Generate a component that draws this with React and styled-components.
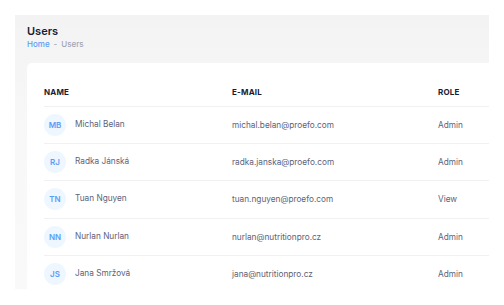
import React from 'react'
import styled, { createGlobalStyle } from 'styled-components'

const GlobalStyle = createGlobalStyle`
  body {
    margin: 0;
    background: #ffffff;
    font-family: Inter, "Noto Sans", "Liberation Sans", sans-serif;
  }
`

const Page = styled.div`
  padding: 15px;
`

const Panel = styled.section`
  width: 474px;
  height: 274px;
  overflow: hidden;
  box-sizing: border-box;
  padding: 9px 0 0 12px;
  background: linear-gradient(180deg, #f3f3f3 0%, #f8f8f8 45%, #f9f9f9 100%);
`

const Title = styled.h1`
  margin: 0 0 1px;
  font-size: 11px;
  line-height: 14px;
  font-weight: 600;
  color: #181c32;
`

const Crumbs = styled.div`
  display: flex;
  gap: 4px;
  font-size: 8px;
  line-height: 11px;
  font-weight: 500;
  color: #a1a5b7;

  & > .home {
    color: #5d9cf5;
  }
`

const Card = styled.div`
  margin-top: 13px;
  padding: 14px 0 0 17px;
  background: #ffffff;
  border-top-left-radius: 5px;
  min-height: 240px;
`

const Table = styled.table`
  width: 470px;
  border-collapse: collapse;
  table-layout: fixed;
`

const Th = styled.th`
  padding: 8.5px 0 8px;
  text-align: left;
  font-size: 8px;
  line-height: 12px;
  font-weight: 700;
  letter-spacing: 0.2px;
  text-transform: uppercase;
  color: #181c32;
  border-bottom: 1px solid #f1f1f4;
`

const Td = styled.td`
  padding: 7.2px 0;
  font-size: 8.25px;
  line-height: 12px;
  color: #5e6278;
  border-bottom: 1px solid #f1f1f4;
`

const User = styled.div`
  display: flex;
  align-items: center;
  gap: 9px;
`

const Avatar = styled.div`
  width: 22px;
  height: 22px;
  border-radius: 50%;
  background: #eef6ff;
  color: #5d9cf5;
  font-size: 8px;
  font-weight: 600;
  display: grid;
  place-items: center;
  flex: none;
`

const Name = styled.span`
  margin-bottom: 2px;
`

const users = [
  { initials: 'MB', name: 'Michal Belan', email: 'michal.belan@proefo.com', role: 'Admin' },
  { initials: 'RJ', name: 'Radka Jánská', email: 'radka.janska@proefo.com', role: 'Admin' },
  { initials: 'TN', name: 'Tuan Nguyen', email: 'tuan.nguyen@proefo.com', role: 'View' },
  { initials: 'NN', name: 'Nurlan Nurlan', email: 'nurlan@nutritionpro.cz', role: 'Admin' },
  { initials: 'JS', name: 'Jana Smržová', email: 'jana@nutritionpro.cz', role: 'Admin' },
]

const App = () => {
  return (
    <>
      <GlobalStyle />
      <Page>
        <Panel>
          <Title>Users</Title>
          <Crumbs>
            <span className='home'>Home</span>
            <span>-</span>
            <span>Users</span>
          </Crumbs>
          <Card>
            <Table>
              <colgroup>
                <col style={{ width: 188 }} />
                <col style={{ width: 206 }} />
                <col />
              </colgroup>
              <thead>
                <tr>
                  <Th>Name</Th>
                  <Th>E-mail</Th>
                  <Th>Role</Th>
                </tr>
              </thead>
              <tbody>
                {users.map(u => (
                  <tr key={u.email}>
                    <Td>
                      <User>
                        <Avatar>{u.initials}</Avatar>
                        <Name>{u.name}</Name>
                      </User>
                    </Td>
                    <Td>{u.email}</Td>
                    <Td>{u.role}</Td>
                  </tr>
                ))}
              </tbody>
            </Table>
          </Card>
        </Panel>
      </Page>
    </>
  )
}

export default App
